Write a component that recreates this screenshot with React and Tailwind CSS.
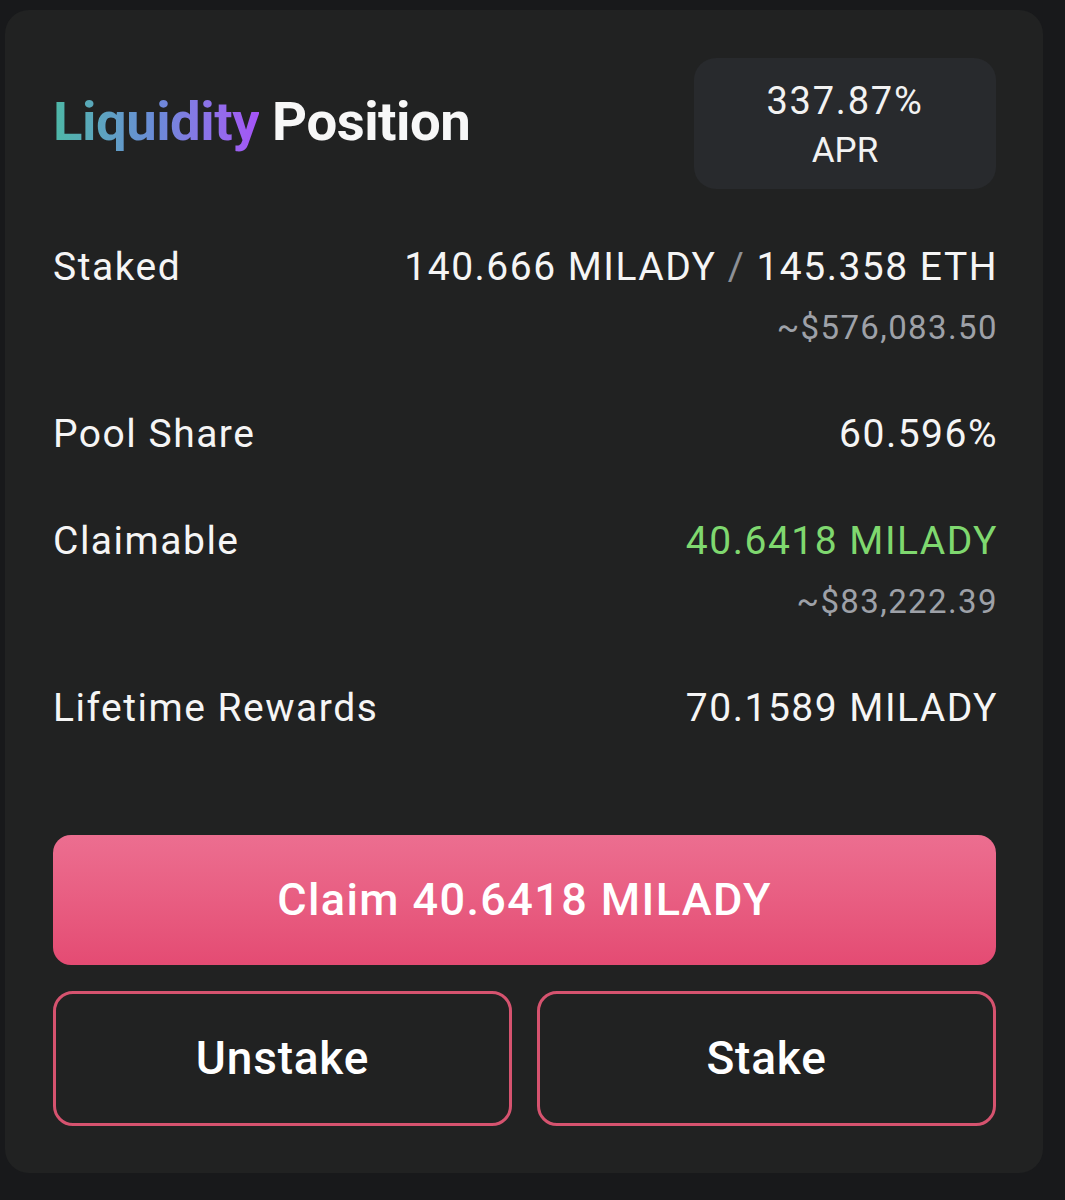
export default function App() {
  const font = { fontFamily: 'Roboto, "Noto Sans", sans-serif' };
  return (
    <div className="min-h-[1200px] w-[1065px] bg-[#18191b] pt-[10px] pl-[5px]" style={font}>
      <div className="w-[1038px] h-[1163px] rounded-[24px] bg-[#212222] pt-[48px] pl-[48px] pr-[47px] flex flex-col">
        <div className="flex items-center justify-between">
          <h1 className="text-[54.5px] font-bold leading-none tracking-[-0.5px] pb-[4px]">
            <span className="bg-gradient-to-r from-[#4db8a6] via-[#6a8ad8] to-[#a553f7] bg-clip-text text-transparent">Liquidity</span>
            <span className="text-[#f7f7f7]"> Position</span>
          </h1>
          <div className="w-[302px] h-[131px] rounded-[22px] bg-[#282a2d] flex flex-col items-center justify-center text-[#f2f2f2]">
            <div className="text-[38px] leading-[54px] tracking-[1.8px]">337.87%</div>
            <div className="text-[35px] leading-[46px]">APR</div>
          </div>
        </div>

        <div className="mt-[54px] flex justify-between text-[39px] leading-[48px] tracking-[1.5px] text-[#f5f5f5]">
          <div>Staked</div>
          <div className="flex flex-col items-end -mr-[2px]">
            <div>140.666 MILADY <span className="text-[#8d9096]">/</span> 145.358 ETH</div>
            <div className="mt-[16px] text-[33px] leading-[42px] tracking-[1.4px] text-[#9ea1a8]">~$576,083.50</div>
          </div>
        </div>

        <div className="mt-[61px] flex justify-between text-[39px] leading-[48px] tracking-[1.5px] text-[#f5f5f5]">
          <div>Pool Share</div>
          <div className="-mr-[2px]">60.596%</div>
        </div>

        <div className="mt-[59px] flex justify-between text-[39px] leading-[48px] tracking-[1.5px] text-[#f5f5f5]">
          <div>Claimable</div>
          <div className="flex flex-col items-end -mr-[2px]">
            <div className="text-[#7fd86f]">40.6418 MILADY</div>
            <div className="mt-[16px] text-[33px] leading-[42px] tracking-[1.4px] text-[#9ea1a8]">~$83,222.39</div>
          </div>
        </div>

        <div className="mt-[61px] flex justify-between text-[39px] leading-[48px] tracking-[1.5px] text-[#f5f5f5]">
          <div>Lifetime Rewards</div>
          <div className="-mr-[2px]">70.1589 MILADY</div>
        </div>

        <button className="mt-[103px] h-[130px] w-full rounded-[18px] bg-gradient-to-b from-[#ec6e90] to-[#e44b73] text-[45px] tracking-[1.4px] font-medium text-white flex items-center justify-center">
          Claim 40.6418 MILADY
        </button>

        <div className="mt-[26px] grid grid-cols-2 gap-[25px]">
          <button className="h-[135px] rounded-[20px] border-[3px] border-[#d6536f] text-[46px] tracking-[0.8px] font-medium text-white flex items-center justify-center">
            Unstake
          </button>
          <button className="h-[135px] rounded-[20px] border-[3px] border-[#d6536f] text-[46px] tracking-[0.8px] font-medium text-white flex items-center justify-center">
            Stake
          </button>
        </div>
      </div>
    </div>
  );
}
